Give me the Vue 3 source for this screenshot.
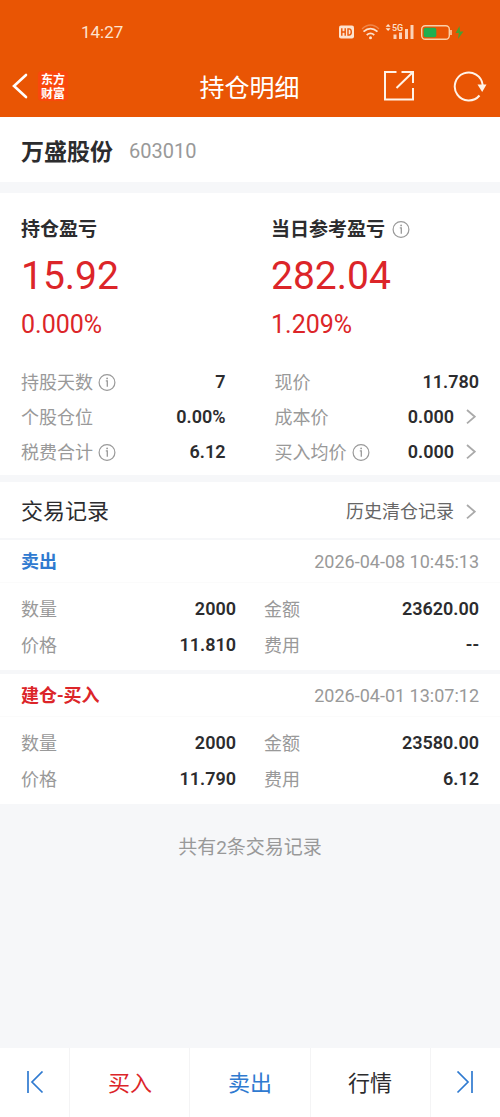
<script setup>
import { h } from 'vue'

const stock = { name: '万盛股份', code: '603010' }

const profits = [
  { label: '持仓盈亏', info: false, amount: '15.92', rate: '0.000%' },
  { label: '当日参考盈亏', info: true, amount: '282.04', rate: '1.209%' },
]

const details = [
  [
    { label: '持股天数', info: true, value: '7' },
    { label: '个股仓位', value: '0.00%' },
    { label: '税费合计', info: true, value: '6.12' },
  ],
  [
    { label: '现价', value: '11.780' },
    { label: '成本价', value: '0.000', more: true },
    { label: '买入均价', info: true, value: '0.000', more: true },
  ],
]

const records = [
  {
    type: '卖出', side: 'sell', time: '2026-04-08 10:45:13',
    fields: [['数量', '2000'], ['金额', '23620.00'], ['价格', '11.810'], ['费用', '--']],
  },
  {
    type: '建仓-买入', side: 'buy', time: '2026-04-01 13:07:12',
    fields: [['数量', '2000'], ['金额', '23580.00'], ['价格', '11.790'], ['费用', '6.12']],
  },
]

const line = { fill: 'none', stroke: 'currentColor' }

const InfoIcon = () =>
  h('svg', { width: 18, height: 18, viewBox: '0 0 18 18', ...line, 'aria-hidden': 'true' }, [
    h('circle', { cx: 9, cy: 8.5, r: 7.9, 'stroke-width': 1.2 }),
    h('path', { d: 'M7.8 6.8H9.3V12.7', 'stroke-width': 1.3 }),
    h('circle', { cx: 9.1, cy: 4.4, r: 0.9, fill: 'currentColor', stroke: 'none' }),
  ])

const MoreIcon = () =>
  h('svg', { width: 10, height: 16, viewBox: '0 0 10 16', ...line, 'aria-hidden': 'true' }, [
    h('path', { d: 'M1 1L8.8 7.7L1 14.4', 'stroke-width': 1.8 }),
  ])
</script>

<template>
  <div class="page">
    <header class="header">
      <div class="status">
        <span class="clock">14:27</span>
        <svg class="status-icons" width="128" height="20" viewBox="0 0 128 20" aria-hidden="true">
          <rect x="2" y="3.5" width="15" height="13" rx="2" fill="#fde3cf" />
          <path d="M4.8 6.2V13.8M4.8 10H8.2M8.2 6.2V13.8M11 6.9H12C13.9 6.9 14.3 8.4 14.3 10S13.9 13.1 12 13.1H11Z" fill="none" stroke="#e95504" stroke-width="1.4" />
          <g fill="none" stroke="#fde3cf" stroke-width="1.7">
            <path d="M25 6.9Q33.5 -1 42 6.9" opacity=".35" stroke-width="1.3" />
            <path d="M26.5 9.7Q33.5 3.5 40.5 9.7M29.7 13Q33.5 9.7 37.3 13" />
          </g>
          <circle cx="33.5" cy="15.8" r="1.5" fill="#fde3cf" />
          <path d="M48.6 4.8L51.1 2L53.6 4.8ZM48.6 6.3L51.1 9L53.6 6.3Z" fill="#fde3cf" />
          <text x="55" y="9" class="network">5G</text>
          <path d="M56.5 12.5H59.5V17H56.5ZM62 10.5H65V17H62ZM68 7H71V17H68ZM73.5 3H76.5V17H73.5Z" fill="#fbd3b8" />
          <rect x="84.7" y="3.7" width="27.6" height="13.6" rx="3.5" fill="none" stroke="#fbd0a8" stroke-width="1.4" />
          <rect x="86.7" y="5.7" width="12.6" height="9.6" rx="2" fill="#1faf50" />
          <path d="M114 8V13" stroke="#fbd0a8" stroke-width="1.6" />
          <path d="M122.5 4L118.5 11H121.8L121 17L126.5 9.5H123Z" fill="#4a9e33" />
        </svg>
      </div>
      <nav class="nav">
        <div class="nav-side">
          <button class="icon-button" type="button" aria-label="返回">
            <svg width="16" height="26" viewBox="0 0 16 26" fill="none" stroke="#fff" stroke-width="2.6" stroke-linecap="round">
              <path d="M14 2L2 13L14 24" />
            </svg>
          </button>
          <span class="logo"><span>东方</span><span>财富</span></span>
        </div>
        <h1 class="title">持仓明细</h1>
        <div class="nav-side nav-actions">
          <button class="icon-button" type="button" aria-label="分享">
            <svg width="32" height="32" viewBox="0 0 32 32" fill="none" stroke="#fff3e8" stroke-width="2">
              <path d="M13.5 2H2V29.5H30V18M18.5 2H30V13M30 2L13.5 18" />
            </svg>
          </button>
          <button class="icon-button" type="button" aria-label="刷新">
            <svg width="34" height="32" viewBox="0 0 34 32" fill="none" stroke="#fff3e8" stroke-width="2">
              <path d="M26.5 25.5A14 14 0 1 1 29.7 15" />
              <path d="M24.5 14.5H33.5L29.2 22Z" fill="#fff3e8" stroke="none" />
            </svg>
          </button>
        </div>
      </nav>
    </header>

    <main>
      <section class="stock">
        <h2 class="stock-name">{{ stock.name }}</h2>
        <span class="stock-code">{{ stock.code }}</span>
      </section>

      <section class="summary">
        <div class="profits">
          <div v-for="p in profits" :key="p.label" class="profit">
            <div class="profit-label">{{ p.label }}<InfoIcon v-if="p.info" class="info" /></div>
            <div class="profit-amount">{{ p.amount }}</div>
            <div class="profit-rate">{{ p.rate }}</div>
          </div>
        </div>
        <div class="details">
          <dl v-for="(column, i) in details" :key="i" class="detail-column">
            <div v-for="d in column" :key="d.label" class="row">
              <dt>{{ d.label }}<InfoIcon v-if="d.info" class="info" /></dt>
              <dd>{{ d.value }}<MoreIcon v-if="d.more" class="more" /></dd>
            </div>
          </dl>
        </div>
      </section>

      <section class="records-head">
        <h2 class="records-title">交易记录</h2>
        <a class="history" href="#history">历史清仓记录<MoreIcon class="more" /></a>
      </section>

      <article v-for="r in records" :key="r.time" class="record">
        <header class="record-head">
          <h3 :class="['record-type', r.side]">{{ r.type }}</h3>
          <time class="record-time">{{ r.time }}</time>
        </header>
        <dl class="record-fields">
          <div v-for="[label, value] in r.fields" :key="label" class="row">
            <dt>{{ label }}</dt>
            <dd>{{ value }}</dd>
          </div>
        </dl>
      </article>

      <p class="total">共有{{ records.length }}条交易记录</p>
    </main>

    <footer class="tabs">
      <button class="tab edge" type="button" aria-label="上一只">
        <svg width="18" height="24" viewBox="0 0 18 24" fill="none" stroke="currentColor" stroke-width="1.7">
          <path d="M2 0V22M16.5 .5L6 11L16.5 21.5" />
        </svg>
      </button>
      <button class="tab buy" type="button">买入</button>
      <button class="tab sell" type="button">卖出</button>
      <button class="tab" type="button">行情</button>
      <button class="tab edge" type="button" aria-label="下一只">
        <svg width="18" height="24" viewBox="0 0 18 24" fill="none" stroke="currentColor" stroke-width="1.7">
          <path d="M16 0V22M1.5 .5L12 11L1.5 21.5" />
        </svg>
      </button>
    </footer>
  </div>
</template>

<style>
body {
  margin: 0;
  background: #f6f7f9;
}
</style>

<style scoped>
.page {
  display: flex;
  flex-direction: column;
  min-height: 100vh;
  background: #f6f7f9;
  color: #2c2c2e;
  font-family: Roboto, "Noto Sans CJK SC", sans-serif;
  font-size: 18px;
  line-height: 24px;
}
h1, h2, h3, p, dl, dd {
  margin: 0;
}
button {
  padding: 0;
  border: 0;
  background: none;
  font: inherit;
  color: inherit;
  cursor: pointer;
}
svg {
  display: block;
  flex: none;
}
.header {
  background: #e95504;
  color: #fff;
}
.status {
  display: flex;
  align-items: center;
  justify-content: space-between;
  height: 64px;
  padding: 0 35px 0 81px;
}
.clock {
  color: #fde3cf;
  font-size: 17px;
  line-height: 20px;
}
.network {
  fill: #fde3cf;
  font-size: 9px;
  font-weight: 500;
}
.nav {
  display: flex;
  align-items: center;
  height: 53px;
  padding: 0 13px 9px 12px;
  box-sizing: border-box;
}
.nav-side {
  display: flex;
  flex: 1;
  align-items: center;
  gap: 10px;
}
.nav-actions {
  justify-content: flex-end;
  gap: 38px;
}
.logo {
  display: flex;
  flex-direction: column;
  padding: 2px 3px 0;
  border-radius: 4px;
  background: #f9480c;
  font-size: 12px;
  font-weight: 700;
  line-height: 14px;
}
.title {
  padding-top: 6px;
  font-size: 25px;
  font-weight: 400;
  line-height: 36px;
}
.stock {
  display: flex;
  align-items: center;
  gap: 16px;
  height: 65px;
  padding: 2px 21px 0;
  background: #fff;
  box-sizing: border-box;
}
.stock-name {
  padding-top: 4px;
  font-size: 23px;
  font-weight: 600;
  line-height: 34px;
}
.stock-code {
  color: #999;
  font-size: 20px;
  line-height: 24px;
}
.summary {
  margin-top: 11px;
  padding: 23px 21px 6px;
  background: #fff;
}
.profits {
  display: grid;
  grid-template-columns: 1fr 1fr;
  column-gap: 42px;
}
.profit-label {
  display: flex;
  align-items: center;
  font-size: 19px;
  font-weight: 600;
  line-height: 28px;
}
.info {
  margin-left: 5px;
  color: #999;
}
.profit-label .info {
  margin-left: 7px;
}
.profit-amount {
  margin-top: 8px;
  color: #dc2529;
  font-size: 39px;
  line-height: 48px;
}
.profit-rate {
  margin-top: 11px;
  color: #dc2529;
  font-size: 25px;
  line-height: 28px;
}
.details {
  display: grid;
  grid-template-columns: 1fr 1fr;
  column-gap: 49px;
  margin-top: 25px;
}
.row {
  display: flex;
  align-items: center;
  justify-content: space-between;
  height: 35px;
}
dt {
  display: flex;
  align-items: center;
  padding-top: 2px;
  color: #999;
}
dd {
  display: flex;
  align-items: center;
  font-weight: 600;
}
.more {
  margin: 0 3px 0 12px;
  color: #aaa;
}
.records-head {
  display: flex;
  align-items: center;
  justify-content: space-between;
  height: 56px;
  margin-top: 7px;
  padding: 4px 21px 0;
  background: #fff;
  box-sizing: border-box;
}
.records-title {
  font-size: 22px;
  font-weight: 400;
  line-height: 30px;
}
.history {
  display: flex;
  align-items: center;
  color: #666;
  text-decoration: none;
}
.record {
  margin-top: 2px;
  padding-bottom: 7px;
  background: #fff;
}
.record + .record {
  margin-top: 4px;
}
.record-head {
  display: flex;
  align-items: center;
  justify-content: space-between;
  height: 43px;
  padding: 2px 21px 0;
  border-bottom: 1px solid #fbfbfb;
  box-sizing: border-box;
}
.record-type {
  font-size: 18px;
  font-weight: 600;
}
.record-time {
  color: #999;
}
.record-fields {
  display: grid;
  grid-template-columns: 1fr 1fr;
  column-gap: 28px;
  padding: 8px 21px 0;
}
.record-fields .row {
  height: 36px;
}
.buy {
  color: #dc2529;
}
.sell {
  color: #2f7ad0;
}
.total {
  padding: 30px 0;
  color: #999;
  font-size: 19px;
  line-height: 28px;
  text-align: center;
}
.tabs {
  display: flex;
  height: 69px;
  margin-top: auto;
  background: #fff;
}
.tab {
  display: flex;
  flex: 12;
  align-items: center;
  justify-content: center;
  padding-top: 2px;
  font-size: 22px;
  line-height: 30px;
}
.tab + .tab {
  border-left: 1px solid #f4f4f5;
}
.tab.edge {
  flex: 7;
  padding-top: 0;
  color: #2f7ad0;
}
</style>
